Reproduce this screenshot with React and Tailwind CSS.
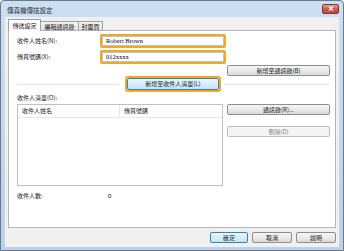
import React from "react";

const cjk = { fontFamily: '"Noto Sans CJK TC", "Noto Sans CJK SC", "Liberation Sans", sans-serif' };

function Btn({ children, className = "", disabled = false, def = false }) {
  const base = disabled
    ? "border-[#bcbfc2] bg-[#f4f4f4] text-[#8a8a8a]"
    : def
    ? "border-[#3c7fb1] bg-gradient-to-b from-[#eaf6fd] to-[#c4e5f8] text-[#222]"
    : "border-[#8e8f8f] bg-gradient-to-b from-[#f4f4f4] via-[#ebebeb] to-[#d9d9d9] text-[#222]";
  return (
    <div
      className={`flex items-center justify-center rounded-[2px] border text-[6px] leading-none ${base} ${className}`}
    >
      {children}
    </div>
  );
}

export default function App() {
  return (
    <div
      className="w-[344px] h-[251px] overflow-hidden flex flex-col border border-[#6c7885] rounded-t-[4px] bg-gradient-to-b from-[#cddff2] to-[#b9d1ea]"
      style={cjk}
    >
      {/* title bar */}
      <div className="h-[16px] shrink-0 flex items-center pl-[6px] pr-[4px]">
        <span className="text-[6.5px] leading-none text-[#1e2a36] pt-[2px]">傳真機傳送設定</span>
        <div className="ml-auto mt-[-1px] w-[17px] h-[10px] rounded-[2px] border border-[#7a3a33] bg-gradient-to-b from-[#e3a093] via-[#cc5a4a] to-[#c04a3a] flex items-center justify-center">
          <svg width="6" height="5" viewBox="0 0 6 5">
            <path d="M1 0.5 L5 4.5 M5 0.5 L1 4.5" stroke="#fff" strokeWidth="1.3" />
          </svg>
        </div>
      </div>

      {/* client area */}
      <div className="mx-[4px] h-[230px] shrink-0 bg-[#f0f0f0] flex flex-col">
        {/* tabs */}
        <div className="h-[13px] flex items-end pl-[3px] relative z-10">
          <div className="h-[12px] w-[33px] bg-white border border-b-0 border-[#a0a0a0] flex items-center justify-center text-[6px] text-[#222] mb-[-1px] pb-[1px]">
            傳送設定
          </div>
          <div className="h-[9px] w-[38px] bg-gradient-to-b from-[#f2f2f2] to-[#e3e3e3] border border-l-0 border-b-0 border-[#a0a0a0] flex items-center justify-center text-[6px] text-[#222]">
            編輯通訊錄
          </div>
          <div className="h-[9px] w-[24px] bg-gradient-to-b from-[#f2f2f2] to-[#e3e3e3] border border-l-0 border-b-0 border-[#a0a0a0] flex items-center justify-center text-[6px] text-[#222]">
            封面頁
          </div>
        </div>

        {/* panel */}
        <div className="ml-[3px] w-[328px] h-[198px] bg-white border border-[#b4b4b4] pl-[8px] pt-[3px] text-[6px] leading-none text-[#222] flex flex-col">
          <div className="flex items-center h-[14px]">
            <span className="w-[83px]">收件人姓名(N):</span>
            <div className="w-[126px] h-[14px] rounded-[2px] border-[2px] border-[#f5a623] bg-white">
              <div className="h-full border border-[#c0c2c8] flex items-center pl-[3px] text-[6.5px] text-black" style={{ fontFamily: '"Liberation Serif", serif' }}>
                Robert Brown
              </div>
            </div>
          </div>
          <div className="flex items-center h-[14px] mt-[2px]">
            <span className="w-[83px]">傳真號碼(X):</span>
            <div className="w-[126px] h-[14px] rounded-[2px] border-[2px] border-[#f5a623] bg-white">
              <div className="h-full border border-[#c0c2c8] flex items-center pl-[3px] text-[6.5px] text-black" style={{ fontFamily: '"Liberation Serif", serif' }}>
                012xxxx
              </div>
            </div>
          </div>
          <div className="flex mt-[1px]">
            <Btn className="ml-[210px] w-[103px] h-[11px]">新增至通訊錄(B)</Btn>
          </div>
          <div className="flex items-center h-[16px]">
            <div className="w-[102px] h-[1px] bg-[#e0e0e0]" />
            <div className="ml-[6px] w-[96px] h-[16px] rounded-[3px] border-[2px] border-[#f5a623]">
              <Btn def className="w-full h-full">新增至收件人清單(L)</Btn>
            </div>
            <div className="ml-[3px] w-[105px] h-[1px] bg-[#e0e0e0]" />
          </div>
          <div className="h-[8px] mt-[2px] flex items-center">收件人清單(O):</div>
          <div className="flex mt-[2px]">
            <div className="w-[206px] h-[82px] border border-[#c0c0c8] bg-white">
              <div className="flex h-[13px] border-b border-[#e8e8e8] items-center">
                <div className="w-[102px] pl-[4px] h-full flex items-center border-r border-[#e8e8e8]">收件人姓名</div>
                <div className="pl-[4px]">傳真號碼</div>
              </div>
            </div>
            <div className="ml-[4px] flex flex-col">
              <Btn className="w-[103px] h-[11px]">通訊錄(R)...</Btn>
              <Btn disabled className="w-[103px] h-[11px] mt-[11px]">刪除(D)</Btn>
            </div>
          </div>
          <div className="flex items-center h-[8px] mt-[6px]">
            <span className="w-[91px]">收件人數:</span>
            <span className="text-black" style={{ fontFamily: '"Liberation Sans", sans-serif' }}>0</span>
          </div>
        </div>

        {/* bottom buttons */}
        <div className="flex justify-end gap-[4px] mt-[4px] pr-[3px]">
          <Btn def className="w-[38px] h-[11px]">確定</Btn>
          <Btn className="w-[40px] h-[11px]">取消</Btn>
          <Btn className="w-[40px] h-[11px]">說明</Btn>
        </div>
      </div>
    </div>
  );
}
